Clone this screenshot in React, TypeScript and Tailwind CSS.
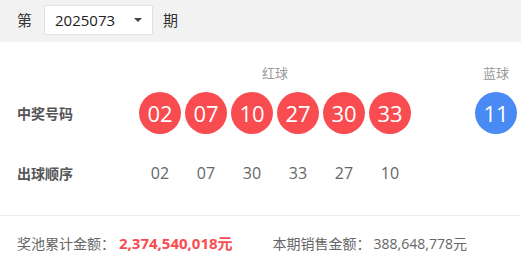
const RED = ['02', '07', '10', '27', '30', '33'];
const ORDER = ['02', '07', '30', '33', '27', '10'];
const BLUE = '11';

export default function App() {
  return (
    <div className="w-[521px] h-[268px] overflow-hidden bg-white font-['Open_Sans','Noto_Sans_CJK_SC',sans-serif] text-[#555]">
      {/* issue picker */}
      <div className="h-[42px] bg-[#f2f2f2] flex items-center pl-[17px] pb-[2px]">
        <span className="text-[15px] text-[#333]">第</span>
        <div className="ml-[12px] w-[109px] h-[30px] bg-white border border-[#e0e0e0] rounded-[2px] flex items-center pl-[10px] pr-[10px]">
          <span className="text-[15px] text-[#222] flex-1">2025073</span>
          <span className="w-0 h-0 border-l-[4px] border-r-[4px] border-t-[4px] border-l-transparent border-r-transparent border-t-[#444]" />
        </div>
        <span className="ml-[10px] text-[15px] text-[#333]">期</span>
      </div>

      {/* column titles */}
      <div className="flex mt-[23px] h-[18px] items-center text-[13px] text-[#999]">
        <div className="w-[139px]" />
        <div className="w-[272px] text-center">红球</div>
        <div className="w-[64px]" />
        <div className="w-[42px] text-center">蓝球</div>
      </div>

      {/* winning numbers */}
      <div className="flex items-center mt-[9px] h-[42px]">
        <div className="w-[139px] pl-[17px] text-[14px] font-bold text-[#555]">中奖号码</div>
        <div className="flex gap-[4px]">
          {RED.map(n => (
            <div key={n} className="w-[42px] h-[42px] rounded-full bg-[#f84c50] text-white text-[22px] flex items-center justify-center">
              {n}
            </div>
          ))}
        </div>
        <div className="ml-[64px] w-[42px] h-[42px] rounded-full bg-[#4a8af4] text-white text-[22px] flex items-center justify-center">
          {BLUE}
        </div>
      </div>

      {/* draw order */}
      <div className="flex items-center mt-[29px] h-[20px]">
        <div className="w-[139px] pl-[17px] text-[14px] font-bold text-[#555]">出球顺序</div>
        <div className="flex gap-[4px]">
          {ORDER.map(n => (
            <div key={n} className="w-[42px] text-center text-[16px] text-[#666]">{n}</div>
          ))}
        </div>
      </div>

      <div className="mt-[32px] h-px bg-[#ebebeb]" />

      {/* totals */}
      <div className="flex items-center h-[54px] pl-[17px] text-[14px] text-[#666]">
        <span>奖池累计金额：</span>
        <span className="ml-[4px] text-[15px] font-bold text-[#f84c50]">2,374,540,018元</span>
        <span className="ml-[40px]">本期销售金额：</span>
        <span className="ml-[3px]">388,648,778元</span>
      </div>
    </div>
  );
}
